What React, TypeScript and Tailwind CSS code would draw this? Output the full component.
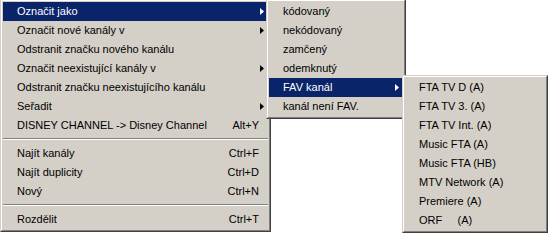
import type { ReactNode } from 'react'
import clsx from 'clsx'

type Item = { label: string; shortcut?: string; sub?: boolean; active?: boolean } | null

const mainItems: Item[] = [
  { label: 'Označit jako', sub: true, active: true },
  { label: 'Označit nové kanály v', sub: true },
  { label: 'Odstranit značku nového kanálu' },
  { label: 'Označit neexistující kanály v', sub: true },
  { label: 'Odstranit značku neexistujícího kanálu' },
  { label: 'Seřadit', sub: true },
  { label: 'DISNEY CHANNEL -> Disney Channel', shortcut: 'Alt+Y' },
  null,
  { label: 'Najít kanály', shortcut: 'Ctrl+F' },
  { label: 'Najít duplicity', shortcut: 'Ctrl+D' },
  { label: 'Nový', shortcut: 'Ctrl+N' },
  null,
  { label: 'Rozdělit', shortcut: 'Ctrl+T' },
]

const markItems: Item[] = [
  { label: 'kódovaný' },
  { label: 'nekódovaný' },
  { label: 'zamčený' },
  { label: 'odemknutý' },
  { label: 'FAV kanál', sub: true, active: true },
  { label: 'kanál není FAV.' },
]

const favItems: Item[] = [
  { label: 'FTA TV D (A)' },
  { label: 'FTA TV 3. (A)' },
  { label: 'FTA TV Int. (A)' },
  { label: 'Music FTA (A)' },
  { label: 'Music FTA (HB)' },
  { label: 'MTV Network (A)' },
  { label: 'Premiere (A)' },
  { label: 'ORF     (A)' },
]

function Arrow({ active }: { active?: boolean }) {
  return (
    <svg width="4" height="7" viewBox="0 0 4 7" className={active ? 'fill-white' : 'fill-black'}>
      <path d="M0 0L4 3.5L0 7Z" />
    </svg>
  )
}

function Frame({ className, children }: { className?: string; children: ReactNode }) {
  return (
    <div
      className={clsx(
        'border border-t-[#d4d0c8] border-l-[#d4d0c8] border-b-[#404040] border-r-[#404040] bg-[#d4d0c8]',
        className
      )}
    >
      <div className="border border-t-white border-l-white border-b-[#808080] border-r-[#808080] p-px">
        {children}
      </div>
    </div>
  )
}

function Menu({ items }: { items: Item[] }) {
  return (
    <>
      {items.map((item, i) =>
        item === null ? (
          // separator: dark line over a light one
          <div key={i} className="h-[9px] pt-[3px]">
            <div className="h-px bg-[#808080]" />
            <div className="h-px bg-white" />
          </div>
        ) : (
          <div
            key={i}
            className={clsx(
              'flex h-[19px] items-center pl-[14px] pr-[4px]',
              item.active ? 'bg-[#0a246a] text-white' : 'text-black'
            )}
          >
            <span className="flex-1 whitespace-pre">{item.label}</span>
            {item.shortcut && <span>{item.shortcut}</span>}
            <span className="flex w-[5px] justify-end">{item.sub && <Arrow active={item.active} />}</span>
          </div>
        )
      )}
    </>
  )
}

export default function App() {
  return (
    <div className="relative h-[233px] w-[550px] overflow-hidden bg-white font-['Liberation_Sans',Arial,sans-serif] text-[11px]">
      <Frame className="-mt-px w-[271px]">
        <Menu items={mainItems} />
      </Frame>

      <Frame className="absolute left-[266px] top-[-1px] w-[140px]">
        <Menu items={markItems} />
      </Frame>

      <Frame className="absolute left-[402px] top-[75px] w-[146px]">
        <Menu items={favItems} />
      </Frame>
    </div>
  )
}
